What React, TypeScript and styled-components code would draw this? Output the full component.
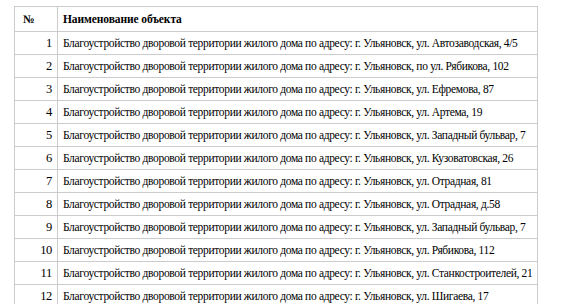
import React from 'react';
import styled, { createGlobalStyle } from 'styled-components';

const GlobalStyle = createGlobalStyle`
  body {
    margin: 0;
    background: #ffffff;
    font-family: 'Liberation Serif', 'Times New Roman', serif;
    color: #000000;
  }
`;

const Page = styled.div`
  padding: 6px 25px 0 14px;
`;

const Table = styled.table`
  width: 524px;
  border-collapse: collapse;
  font-size: 11.5px;
  letter-spacing: -0.33px;
  table-layout: fixed;
`;

const HeadCell = styled.th<{ $num?: boolean }>`
  border: 1px solid #cccccc;
  padding: 4px 5px 4px ${(p) => (p.$num ? '8px' : '5px')};
  text-align: left;
  font-weight: bold;
  letter-spacing: -0.1px;
  width: ${(p) => (p.$num ? '43px' : 'auto')};
  height: 25px;
  box-sizing: border-box;
`;

const Cell = styled.td<{ $num?: boolean }>`
  border: 1px solid #cccccc;
  padding: 3px 5px;
  text-align: ${(p) => (p.$num ? 'right' : 'left')};
  font-size: ${(p) => (p.$num ? '12.5px' : 'inherit')};
  height: 23px;
  box-sizing: border-box;
  white-space: nowrap;
`;

const prefix = 'Благоустройство дворовой территории жилого дома по адресу: г. Ульяновск, ';

const objects = [
  'ул. Автозаводская, 4/5',
  'по ул. Рябикова, 102',
  'ул. Ефремова, 87',
  'ул. Артема, 19',
  'ул. Западный бульвар, 7',
  'ул. Кузоватовская, 26',
  'ул. Отрадная, 81',
  'ул. Отрадная, д.58',
  'ул. Западный бульвар, 7',
  'ул. Рябикова, 112',
  'ул. Станкостроителей, 21',
  'ул. Шигаева, 17',
];

const App: React.FC = () => {
  return (
    <Page>
      <GlobalStyle />
      <Table>
        <thead>
          <tr>
            <HeadCell $num>№</HeadCell>
            <HeadCell>Наименование объекта</HeadCell>
          </tr>
        </thead>
        <tbody>
          {objects.map((o, i) => (
            <tr key={i}>
              <Cell $num>{i + 1}</Cell>
              <Cell>{prefix + o}</Cell>
            </tr>
          ))}
        </tbody>
      </Table>
    </Page>
  );
};

export default App;
